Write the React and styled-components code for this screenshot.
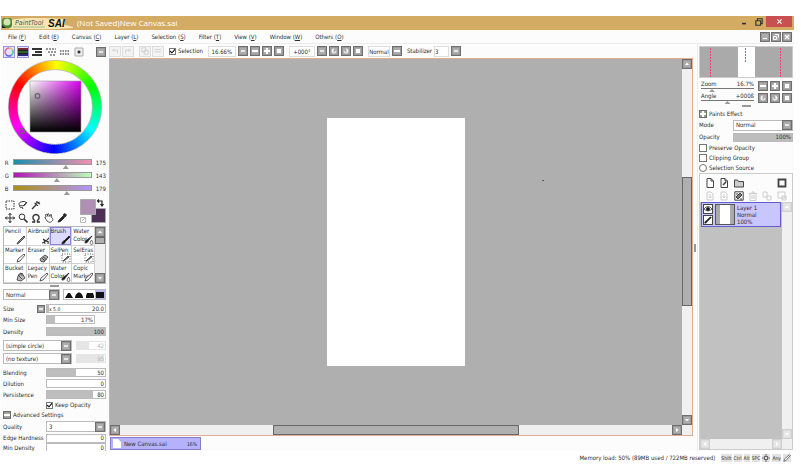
import React from "react";
import styled, { createGlobalStyle } from "styled-components";

const GlobalStyle = createGlobalStyle`
  * { box-sizing: border-box; }
  body { margin: 0; background: #fff; }
  body, button, input, select {
    font-family: "DejaVu Sans Condensed", "DejaVu Sans", sans-serif;
    font-size: 6px;
    line-height: 8px;
    color: #2c2c2c;
  }
  button, input, select { margin: 0; padding: 0; border-radius: 0; }
  svg { display: block; }
`;

const Window = styled.div`
  display: flex;
  flex-direction: column;
  height: 100vh;
  padding: 16px 7px 6px 1px;
`;

const TitleBar = styled.header`
  display: flex;
  align-items: center;
  flex: none;
  height: 14px;
  background: #d4ab62;
`;

const Title = styled.h1`
  flex: 1;
  margin: 0 0 0 4px;
  font: 400 8px/14px "Open Sans", sans-serif;
  color: #fff;
`;

const WindowButton = styled.button`
  display: flex;
  align-items: center;
  justify-content: center;
  width: ${(p) => (p.$close ? "26px" : "15px")};
  height: 11px;
  margin-right: ${(p) => (p.$close ? "2px" : "0")};
  align-self: flex-start;
  border: 0;
  background: ${(p) => (p.$close ? "#c75050" : "transparent")};
`;

const MenuBar = styled.nav`
  display: flex;
  align-items: center;
  flex: none;
  gap: 13px;
  height: 14px;
  padding: 0 2px 0 7px;
  border-bottom: 1px solid #ececec;
  background: #fcfcfc;
`;

const MenuItem = styled.button`
  border: 0;
  background: none;
  white-space: nowrap;
`;

const MenuControls = styled.div`
  display: flex;
  gap: 1px;
  margin-left: auto;
`;

const MiniButton = styled.button`
  display: flex;
  align-items: center;
  justify-content: center;
  flex: none;
  width: ${(p) => (p.$small ? "8px" : "10px")};
  height: ${(p) => (p.$small ? "8px" : "10px")};
  border: 1px solid ${(p) => (p.$faded ? "#d0d0d0" : "#6e6e6e")};
  background: ${(p) => (p.$faded ? "#e6e6e6" : "#adadad")};
  box-shadow: inset 0 0 0 1px ${(p) => (p.$faded ? "#ddd" : "#9a9a9a")};
`;

const Body = styled.main`
  display: flex;
  flex: 1;
  min-height: 0;
  background: #fcfcfc;
`;

const Tools = styled.aside`
  display: flex;
  flex-direction: column;
  flex: none;
  width: 108px;
  padding: 1px 3px 0 2px;
  overflow: hidden;
`;

const ColorTabs = styled.div`
  display: flex;
  align-items: center;
  flex: none;
  gap: 2px;
  height: 13px;

  & > :last-child { margin-left: auto; }
`;

const ColorTab = styled.button`
  display: flex;
  align-items: center;
  justify-content: center;
  width: 12px;
  height: 12px;
  border: 1px solid ${(p) => (p.$on ? "#9a93e6" : "transparent")};
  background: ${(p) => (p.$on ? "#e3e1fd" : "none")};
`;

const Wheel = styled.svg`
  align-self: center;
  flex: none;
  width: 94px;
  height: 94px;
  margin: 2px 0 5px;
`;

const Channel = styled.label`
  display: grid;
  grid-template-columns: 10px 1fr 14px;
  align-items: start;
  flex: none;
  height: 13px;

  span:last-child { text-align: right; }
`;

const ChannelRange = styled.input`
  appearance: none;
  width: 100%;
  height: 6px;
  background: none;

  &::-webkit-slider-runnable-track {
    height: 6px;
    border: 1px solid #999;
    background: linear-gradient(to right, ${(p) => p.$from}, ${(p) => p.$to});
  }
  &::-webkit-slider-thumb {
    appearance: none;
    width: 6px;
    height: 4px;
    margin-top: 5px;
    background: #999;
    clip-path: polygon(50% 0, 100% 100%, 0 100%);
  }
`;

const ToolArea = styled.div`
  display: flex;
  justify-content: space-between;
  flex: none;
  height: 28px;
`;

const ToolGrid = styled.div`
  display: grid;
  grid-template-columns: repeat(5, 13px);
  grid-auto-rows: 13px;
`;

const ToolButton = styled.button`
  display: flex;
  align-items: center;
  justify-content: center;
  border: 0;
  background: none;
`;

const Swatches = styled.svg`
  width: 27px;
  height: 26px;
`;

const BrushArea = styled.div`
  display: flex;
  flex: none;
  height: 58px;
  border: 1px solid #b5b5b5;
`;

const BrushGrid = styled.div`
  display: grid;
  flex: 1;
  grid-template-columns: repeat(4, 1fr);
  grid-auto-rows: 1fr;
`;

const BrushButton = styled.button`
  display: grid;
  align-items: start;
  overflow: hidden;
  border: solid #d2d2d2;
  border-width: 0 1px 1px 0;
  padding-left: 1px;
  background: ${(p) => (p.$on ? "#dcdafd" : "#fff")};
  box-shadow: ${(p) => (p.$on ? "inset 0 0 0 1px #8d86dd" : "none")};
  line-height: 8px;
  text-align: left;
  white-space: pre-line;

  span, svg { grid-area: 1 / 1; }
  svg { place-self: end; }
`;

const VScroll = styled.div`
  display: flex;
  flex-direction: column;
  flex: none;
  width: 10px;
  background: #f0f0f0;
`;

const HScroll = styled.div`
  display: flex;
  flex: none;
  height: 10px;
  padding-right: 10px;
  background: #f0f0f0;
`;

const Track = styled.div`
  display: flex;
  flex: 1;
  flex-direction: ${(p) => (p.$vertical ? "column" : "row")};
`;

const Space = styled.div`
  flex: ${(p) => p.$grow};
`;

const Thumb = styled.div`
  flex: ${(p) => p.$grow};
  border: 1px solid #666;
  background: #afafaf;
`;

const Grip = styled.div`
  flex: none;
  align-self: center;
  width: ${(p) => (p.$vertical ? "2px" : "9px")};
  height: ${(p) => (p.$vertical ? "8px" : "2px")};
  margin: ${(p) => (p.$vertical ? "0 1px" : "1px 0 2px")};
  background: #999;
`;

const BlendRow = styled.div`
  display: flex;
  flex: none;
  gap: 3px;
  height: 11px;
  margin-bottom: 3px;
`;

const SelectBox = styled.div`
  display: flex;
  align-items: center;
  flex: 1;
  min-width: 0;
  height: 11px;
  border: 1px solid #bbb;
  background: #fff;
`;

const Select = styled.select`
  appearance: none;
  flex: 1;
  min-width: 0;
  height: 9px;
  padding-left: 2px;
  border: 0;
  background: #fff;
`;

const Tips = styled.div`
  display: flex;
  width: 43px;
  border: 1px solid #bbb;
  background: #fff;
`;

const TipButton = styled.button`
  flex: 1;
  border: 0;
  background: ${(p) => (p.$on ? "#b9b5f5" : "none")};
`;

const Setting = styled.label`
  display: grid;
  grid-template-columns: 43px 1fr;
  align-items: center;
  flex: none;
  height: ${(p) => p.$height || 11}px;
  white-space: nowrap;
  padding-right: ${(p) => (p.$short ? "11px" : "0")};
`;

const SizeLabel = styled.span`
  display: flex;
  align-items: center;
  justify-content: space-between;
  padding-right: 1px;
`;

const Bar = styled.span`
  display: grid;
  grid-template-columns: 1fr;
  align-items: center;
  height: 9px;
  opacity: ${(p) => (p.$faded ? 0.35 : 1)};

  input, b, i { grid-area: 1 / 1; }
  b, i { font-weight: 400; font-style: normal; pointer-events: none; }
  b { padding-right: 2px; text-align: right; }
  i { padding-left: 3px; font-size: 5px; }
`;

const BarRange = styled.input`
  appearance: none;
  width: 100%;
  min-width: 0;
  height: 9px;
  border: 1px solid #bbb;
  background: linear-gradient(to right, #bdbdbd ${(p) => p.value}%, #fff ${(p) => p.value}%);

  &::-webkit-slider-thumb { appearance: none; width: 1px; height: 7px; }
`;

const Shapes = styled.div`
  flex: none;
  padding: 1px 0 2px;
`;

const ShapeRow = styled.div`
  display: grid;
  grid-template-columns: 69px 1fr;
  gap: 4px;
  align-items: center;
  height: 13px;
`;

const Check = styled.label`
  display: flex;
  align-items: center;
  flex: none;
  gap: 2px;
  height: 10px;
  margin-left: ${(p) => (p.$indent ? "43px" : "0")};
  white-space: nowrap;
`;

const Tick = styled.input`
  appearance: none;
  display: grid;
  place-items: center;
  width: ${(p) => (p.$small ? "7px" : "8px")};
  height: ${(p) => (p.$small ? "7px" : "8px")};
  border: 1px solid #777;
  border-radius: ${(p) => (p.type === "radio" ? "50%" : "0")};
  background: #fff;

  &:checked::before {
    content: "";
    width: 5px;
    height: 5px;
    background: #111;
    clip-path: polygon(0 40%, 40% 70%, 100% 0, 100% 35%, 40% 100%, 0 70%);
  }
`;

const SectionTitle = styled.div`
  display: flex;
  align-items: center;
  flex: none;
  gap: 2px;
  height: 10px;
`;

const Work = styled.section`
  display: flex;
  flex-direction: column;
  flex: 1;
  min-width: 0;
`;

const Toolbar = styled.div`
  display: flex;
  align-items: center;
  flex: none;
  height: 14px;
`;

const Group = styled.div`
  display: flex;
  align-items: center;
  gap: ${(p) => p.$gap || 2}px;
  margin-right: 5px;
`;

const FadedButton = styled.button`
  display: flex;
  align-items: center;
  justify-content: center;
  width: 12px;
  height: 11px;
  border: 1px solid #ddd;
  background: #f3f3f3;
`;

const Field = styled.input`
  width: ${(p) => p.$width}px;
  height: 11px;
  border: 1px solid #ddd;
  background: #fff;
  text-align: ${(p) => p.$align || "center"};
`;

const Frame = styled.div`
  display: flex;
  flex-direction: column;
  flex: 1;
  min-height: 0;
  border: 1px solid #e0ac92;
`;

const Stage = styled.div`
  display: flex;
  flex: 1;
  min-height: 0;
`;

const Desk = styled.div`
  position: relative;
  display: flex;
  align-items: center;
  justify-content: center;
  flex: 1;
  background: #afafaf;
`;

const Paper = styled.div`
  height: 67.5%;
  aspect-ratio: 139 / 248;
  background: #fff;
`;

const Cursor = styled.div`
  position: absolute;
  left: 75.5%;
  top: 33%;
  width: 2px;
  height: 1px;
  background: #555;
`;

const FileTabs = styled.div`
  flex: none;
  height: 15px;
  padding: 1px 0 0 1px;
`;

const FileTab = styled.button`
  display: flex;
  align-items: center;
  gap: 3px;
  width: 91px;
  height: 13px;
  padding: 0 3px 0 2px;
  border: 1px solid #837dcb;
  background: #b5b1fb;

  small { margin-left: auto; font-size: 5px; }
`;

const Layers = styled.aside`
  display: flex;
  flex-direction: column;
  flex: none;
  width: 97px;
  padding: 2px 1px 1px 1px;
  border-left: 1px solid #eee;
`;

const Navigator = styled.svg`
  flex: none;
  width: 100%;
  height: 32px;
  margin-bottom: 2px;
`;

const NavRow = styled.div`
  display: grid;
  grid-template-columns: 1fr 35px;
  gap: 4px;
  align-items: center;
  flex: none;
  height: 12px;
  padding-left: 2px;
`;

const NavSlider = styled.label`
  display: grid;
  grid-template-columns: 1fr auto;
  grid-template-rows: 7px 5px;
  line-height: 7px;

  input { grid-column: 1 / 3; }
`;

const NavRange = styled.input`
  appearance: none;
  width: 100%;
  height: 3px;
  background: none;

  &::-webkit-slider-runnable-track { height: 1px; background: #777; }
  &::-webkit-slider-thumb {
    appearance: none;
    width: 6px;
    height: 3px;
    margin-top: 1px;
    background: #999;
    clip-path: polygon(50% 0, 100% 100%, 0 100%);
  }
`;

const ModeRow = styled.label`
  display: grid;
  grid-template-columns: 34px 1fr;
  align-items: center;
  flex: none;
  height: 12px;
`;

const LayerPanel = styled.div`
  display: flex;
  flex-direction: column;
  flex: 1;
  min-height: 0;
  border: 1px solid #ccc;
`;

const LayerTools = styled.div`
  display: grid;
  grid-template-columns: repeat(6, 1fr);
  grid-auto-rows: 13px;
  flex: none;
  padding: 2px 3px 0;
`;

const LayerList = styled.div`
  flex: 1;
  padding: 0 1px;
  background: #c1c1c1;
`;

const LayerItem = styled.div`
  display: flex;
  gap: 2px;
  height: 25px;
  padding: 1px;
  border: 1px solid #635bd0;
  background: #c9c6fd;
  line-height: 7px;
`;

const LayerToggles = styled.div`
  display: flex;
  flex-direction: column;
  gap: 1px;
`;

const LayerToggle = styled.button`
  display: flex;
  align-items: center;
  justify-content: center;
  width: 10px;
  height: 10px;
  border: 1px solid #444;
  background: #fff;
`;

const Thumbnail = styled.div`
  width: 20px;
  border: solid #aaa;
  border-width: 0 5px;
  outline: 1px solid #555;
  outline-offset: -1px;
  background: #fff;
`;

const StatusBar = styled.footer`
  display: flex;
  align-items: center;
  justify-content: flex-end;
  flex: none;
  height: 13px;
  padding-right: 2px;

  span { margin-right: 5px; }
`;

const Key = styled.kbd`
  display: flex;
  align-items: center;
  height: 8px;
  padding: 0 1px;
  background: #e2e2e2;
  background-clip: content-box;
  font: 5px/8px "DejaVu Sans Condensed", sans-serif;
`;

const glyphs = {
  down: <path d="M1 2h4L3 4.5z" fill="#fff" />,
  up: <path d="M1 4h4L3 1.5z" fill="#fff" />,
  left: <path d="M4 1v4L1.5 3z" fill="#fff" />,
  right: <path d="M2 1v4l2.500-2z" fill="#fff" />,
  minus: <path d="M0 2h6v2H0z" fill="#fff" />,
  plus: <path d="M2 0h2v2h2v2H4v2H2V4H0V2h2z" fill="#fff" />,
  square: <path d="M1 1h4v4H1z" fill="#fff" />,
  box: <path d="M1 2h4v2H1z" fill="#e6e6e6" />,
  cw: <path d="M1 3a2 2 0 1 0 2-2M3 3h2" fill="none" stroke="#fff" />,
  ccw: <path d="M5 3a2 2 0 1 1-2-2M3 3H1" fill="none" stroke="#fff" />,
  low: <path d="M1 4h4v1H1z" fill="#fff" />,
  restore: <path d="M.5 2.500h3v3h-3zM2 .5h3.500v3" fill="none" stroke="#fff" />,
  cross: <path d="M1 1l4 4M5 1L1 5" stroke="#fff" strokeWidth="1.300" />,
};

function Mini({ glyph, label, faded, small }) {
  return (
    <MiniButton aria-label={label || glyph} $faded={faded} $small={small}>
      <svg width="6" height="6" viewBox="0 0 6 6">{glyphs[glyph]}</svg>
    </MiniButton>
  );
}

function Icon({ size = 10, color = "#333", children }) {
  return (
    <svg width={size} height={size} viewBox="0 0 10 10" fill="none" stroke={color}>
      {children}
    </svg>
  );
}

const channels = [
  { name: "R", value: 175, from: "#198fae", to: "#f58fae" },
  { name: "G", value: 143, from: "#b412b8", to: "#b9ffb9" },
  { name: "B", value: 179, from: "#af8f12", to: "#b094ff" },
];

const tools = [
  ["Select", <path d="M1 1h8v8H1z" strokeDasharray="1.500 1" />],
  ["Lasso", <path d="M2 6C0 4 1 2 5 1.500s4 3 1 4-3-1-4 .5 1 2 2 1l1 2M6 5l3-3" />],
  ["Wand", <path d="M1 9l5-5M6 1v2M3.500 3.500h2M8.500 2L7 3l2 1M6.500 5v1" strokeWidth="1.300" />],
  null,
  null,
  ["Move", <path d="M5 0v10M0 5h10M3.500 2L5 .5 6.500 2M3.500 8L5 9.500 6.500 8M2 3.500L.5 5 2 6.500M8 3.500L9.500 5 8 6.500" />],
  ["Zoom", <><circle cx="4" cy="3.800" r="2.800" /><path d="M6 6l3.500 3.500" strokeWidth="1.600" /></>],
  ["Rotate", <path d="M1 9h2.500V7.500C.5 5 2 1.500 5 1.500S9.500 5 6.500 7.500V9H9" strokeWidth="1.400" />],
  ["Hand", <path d="M3 8L.8 4.500 2 4 1.500 1.500l1-.5L4 3.500 3.500 1l1-.3L6 3.500l.5-2 1 .2.2 3 1 .8C9.500 8 7 9.500 5 9.300z" strokeWidth=".8" />],
  ["Dropper", <path d="M1 9l1-2 4-4 1.500 1.500-4 4zM6 2l2 2 1.500-2L8 .5z" fill="#222" />],
];

const pen = <path d="M1 9l1-3 6-5 1 1-5 6z" fill="#fff" strokeWidth=".8" />;
const darkBrush = <path d="M1 9c0-2 1-3 2-3l5-5 1 1-5 5c0 1-1 2-3 2z" fill="#111" />;
const wetBrush = <><path d="M1 8c0-2 1-3 2-3l5-4-4 5c0 1-1 2-3 2z" fill="#111" /><path d="M7.500 5c2 3 1.500 4.500 0 4.500S5.500 8 7.500 5z" fill="#fff" strokeWidth=".7" /></>;
const eraser = <path d="M1 6l5-4 3 2-4 5-3-.5zM3 5l3 3M4.500 4l3 3" fill="#aaa" strokeWidth=".8" />;
const selMark = <><path d="M1 1h8v8H1z" strokeDasharray="1 1.500" strokeWidth=".8" /><path d="M2 8l5-5 1 1-5 4z" fill="#777" strokeWidth=".7" /></>;

const brushes = [
  ["Pencil", <path d="M1 9l1-2 6-6 1 1-6 6z" fill="#888" strokeWidth=".8" />],
  ["AirBrush", <path d="M1 8c3 0 4-2 8-6M2 4l3 2 3 1M4 9l-1-4M7 7v2" strokeWidth="1.100" />],
  ["Brush", darkBrush],
  ["Water\nColor", wetBrush],
  ["Marker", pen],
  ["Eraser", eraser],
  ["SelPen", selMark],
  ["SelEras", selMark],
  ["Bucket", <path d="M1 8l1-4 4-3 3 5-4 3zM3 4l3 3M2 4c2-4 4-3 4 0" fill="#bbb" strokeWidth=".8" />],
  ["Legacy\nPen", pen],
  ["Water\nColor", wetBrush],
  ["Copic\nMarker", pen],
];

const tips = [
  "M1 8h8L6 3H4z",
  "M1 8h8C9 5 7 2.500 5 2.500S1 5 1 8z",
  "M1 8h8V6L8 3H2L1 6z",
  "M1 2h8v6H1z",
];

const page = <path d="M2 .5h4L8.500 3v6.500H2zM6 .5V3h2.500" />;
const fadedPage = <path d="M2 1h4l2 2v6H2zM5 3v4M3.500 5.500L5 7l1.500-1.500" />;

const layerTools = [
  ["New layer", page],
  ["New linework layer", <>{page}<path d="M4 7l3-3" strokeWidth="1.600" /></>],
  ["New folder", <path d="M.5 2h3l1 1.500h5V9h-9z" fill="#ccc" />],
  null,
  null,
  ["Mask", <path d="M1.500 1.500h7v7h-7z" strokeWidth="1.800" />],
  ["Transfer down", fadedPage, true],
  ["Merge down", fadedPage, true],
  ["Clear layer", <><path d="M.8 .8h8.400v8.400H.8z" /><path d="M2 6l4-4 2 2-4 4zM2 3h2M6 8h2" fill="#777" /></>],
  ["Delete layer", <path d="M1 2.500h8M2 3v6.500h6V3M4 2V1h2v1M4 4v4M6 4v4" />, true],
  ["Copy mask", <path d="M1 1h4v5H1zM5 5h4v4H5z" />, true],
  ["Apply mask", <path d="M1 1h7v6H1zM5 5h4v4H5z" />, true],
];

function ValueBar({ value, text, prefix, faded, label }) {
  return (
    <Bar $faded={faded}>
      <BarRange type="range" value={value} readOnly aria-label={label} />
      {prefix && <i>{prefix}</i>}
      <b>{text}</b>
    </Bar>
  );
}

function Dropdown({ value, label }) {
  return (
    <SelectBox>
      <Select aria-label={label} defaultValue={value}>
        <option>{value}</option>
      </Select>
      <Mini glyph="box" label={"Open " + label} />
    </SelectBox>
  );
}

function ColorWheel() {
  const hues = Array.from({ length: 120 }, (_, i) => i * 3);
  const point = (deg) => {
    const a = (deg * Math.PI) / 180;
    return `${47 + 42 * Math.cos(a)} ${47 + 42 * Math.sin(a)}`;
  };
  return (
    <Wheel viewBox="0 0 94 94">
      <defs>
        <linearGradient id="sat">
          <stop stopColor="#fff" />
          <stop offset="1" stopColor="#d900f0" />
        </linearGradient>
        <linearGradient id="dark" x2="0" y2="1">
          <stop stopColor="#000" stopOpacity="0" />
          <stop offset="1" stopColor="#000" />
        </linearGradient>
      </defs>
      <circle cx="47" cy="47" r="42" fill="none" stroke="#bbb" strokeWidth="10" />
      {hues.map((d) => (
        <path
          key={d}
          d={`M${point(d)}A42 42 0 0 1 ${point(d + 4)}`}
          stroke={`hsl(${(150 + d) % 360} 100% 50%)`}
          strokeWidth="8.500"
          fill="none"
        />
      ))}
      <path d="M22 21h51v51H22z" fill="url(#sat)" />
      <path d="M22 21h51v51H22z" fill="url(#dark)" stroke="#999" strokeWidth=".6" />
      <g fill="none" stroke="#666" strokeWidth="1.200">
        <circle cx="29.500" cy="36" r="2.300" />
        <circle cx="14" cy="71" r="2.500" />
      </g>
    </Wheel>
  );
}

function ToolPanel() {
  return (
    <Tools>
      <ColorTabs>
        <ColorTab $on aria-label="Wheel">
          <svg width="10" height="10" viewBox="0 0 10 10" fill="none" strokeWidth="1.500">
            <path d="M5 1a4 4 0 0 1 3.500 2" stroke="#d6c84a" />
            <path d="M8.500 3A4 4 0 0 1 7 8.500" stroke="#4fc78a" />
            <path d="M7 8.500A4 4 0 0 1 2 7.500" stroke="#5a68e0" />
            <path d="M2 7.500A4 4 0 0 1 5 1" stroke="#e06a90" />
          </svg>
        </ColorTab>
        <ColorTab $on aria-label="RGB">
          <svg width="10" height="10" viewBox="0 0 10 10">
            <path d="M0 1h10v8H0z" fill="#222" />
            <path d="M0 2h10" stroke="#c33" />
            <path d="M0 5h10" stroke="#3a3" />
            <path d="M0 8h10" stroke="#33c" />
          </svg>
        </ColorTab>
        <ColorTab aria-label="HSV"><Icon><path d="M0 2h10M3 5h7M0 8h10" strokeWidth="2" /></Icon></ColorTab>
        <ColorTab aria-label="Mixer"><Icon color="#777"><path d="M0 2h10M2 5h8M4 8h6" strokeDasharray="2 1" strokeWidth="1.500" /></Icon></ColorTab>
        <ColorTab aria-label="Swatches"><Icon color="#888"><path d="M0 4h10M0 7h10" strokeDasharray="1.500 1" strokeWidth="2" /></Icon></ColorTab>
        <ColorTab aria-label="Scratchpad"><Icon color="#aaa"><path d="M1 1h8v8H1z" fill="#eee" /><circle cx="5" cy="5" r="1.600" fill="#222" /></Icon></ColorTab>
        <Mini glyph="box" label="Color options" />
      </ColorTabs>
      <ColorWheel />
      {channels.map((c) => (
        <Channel key={c.name}>
          <span>&nbsp;{c.name}</span>
          <ChannelRange type="range" max="255" defaultValue={c.value} $from={c.from} $to={c.to} />
          <span>{c.value}</span>
        </Channel>
      ))}
      <ToolArea>
        <ToolGrid>
          {tools.map((t, i) =>
            t ? (
              <ToolButton key={i} aria-label={t[0]}><Icon>{t[1]}</Icon></ToolButton>
            ) : (
              <span key={i} />
            )
          )}
        </ToolGrid>
        <Swatches viewBox="0 0 27 26">
          <path d="M12.500 10.500h14v14h-14z" fill="#4b2f57" stroke="#aaa" />
          <path d="M1.500 1.500h15v15h-15z" fill="#af8fb3" stroke="#aaa" />
          <path d="M19 3h4v4M20 1.500L18.500 3 20 4.500M21.500 6L23 8l1.500-2" fill="none" stroke="#222" strokeWidth="1.200" />
          <path d="M1.500 19.500h5v5h-5zM3 23l3-3" fill="#fff" stroke="#bbb" />
        </Swatches>
      </ToolArea>
      <BrushArea>
        <BrushGrid>
          {brushes.map(([name, icon], i) => (
            <BrushButton key={i} $on={name === "Brush"}>
              <span>{name}</span>
              <Icon>{icon}</Icon>
            </BrushButton>
          ))}
        </BrushGrid>
        <VScroll>
          <Mini glyph="up" />
          <Track $vertical>
            <Thumb $grow={1} />
            <Space $grow={6} />
          </Track>
          <Mini glyph="down" />
        </VScroll>
      </BrushArea>
      <Grip />
      <BlendRow>
        <Dropdown value="Normal" label="Brush mode" />
        <Tips>
          {tips.map((d, i) => (
            <TipButton key={d} $on={i === 3} aria-label={"Tip " + (i + 1)}>
              <svg width="10" height="9" viewBox="0 0 10 9"><path d={d} fill="#111" /></svg>
            </TipButton>
          ))}
        </Tips>
      </BlendRow>
      <Setting>
        <SizeLabel>Size <Mini glyph="box" label="Size unit" small /></SizeLabel>
        <ValueBar value={4} prefix="x 5.0" text="20.0" label="Size" />
      </Setting>
      <Setting $short>Min Size<ValueBar value={17} text="17%" label="Min Size" /></Setting>
      <Setting $height={13}>Density<ValueBar value={100} text="100" label="Density" /></Setting>
      <Shapes>
        <ShapeRow>
          <Dropdown value="(simple circle)" label="Brush shape" />
          <ValueBar value={42} text="42" faded label="Shape strength" />
        </ShapeRow>
        <ShapeRow>
          <Dropdown value="(no texture)" label="Texture" />
          <ValueBar value={95} text="95" faded label="Texture strength" />
        </ShapeRow>
      </Shapes>
      <Setting>Blending<ValueBar value={50} text="50" label="Blending" /></Setting>
      <Setting>Dilution<ValueBar value={0} text="0" label="Dilution" /></Setting>
      <Setting>Persistence<ValueBar value={80} text="80" label="Persistence" /></Setting>
      <Check $indent><Tick $small type="checkbox" defaultChecked />Keep Opacity</Check>
      <SectionTitle><Mini glyph="minus" label="Collapse" small />Advanced Settings</SectionTitle>
      <Setting $height={13}>Quality<Dropdown value="3" label="Quality" /></Setting>
      <Setting $height={10}>Edge Hardness<ValueBar value={0} text="0" label="Edge Hardness" /></Setting>
      <Setting $height={9}>Min Density<ValueBar value={0} text="0" label="Min Density" /></Setting>
    </Tools>
  );
}

function Workspace() {
  return (
    <Work>
      <Toolbar>
        <Group $gap={1}>
          <FadedButton aria-label="Undo"><Icon size={8} color="#ccc"><path d="M8 8V4H2M4 2L2 4l2 2" /></Icon></FadedButton>
          <FadedButton aria-label="Redo"><Icon size={8} color="#ccc"><path d="M2 8V4h6M6 2l2 2-2 2" /></Icon></FadedButton>
        </Group>
        <Group $gap={1}>
          <FadedButton aria-label="Deselect"><Icon size={8} color="#ccc"><path d="M1 1h5v5H1zM4 4h5v5H4z" /></Icon></FadedButton>
          <FadedButton aria-label="Invert"><Icon size={8} color="#ccc"><path d="M1 3h8M1 6h8" /></Icon></FadedButton>
        </Group>
        <Group>
          <Check><Tick $small type="checkbox" defaultChecked />Selection</Check>
        </Group>
        <Group>
          <Field $width={28} defaultValue="16.66%" aria-label="Zoom" />
          <Mini glyph="box" label="Zoom list" />
          <Mini glyph="minus" label="Zoom out" />
          <Mini glyph="plus" label="Zoom in" />
          <Mini glyph="square" label="Reset zoom" />
        </Group>
        <Group>
          <Field $width={26} defaultValue="+000°" aria-label="Angle" />
          <Mini glyph="box" label="Angle list" />
          <Mini glyph="ccw" label="Rotate left" />
          <Mini glyph="cw" label="Rotate right" />
          <Mini glyph="square" label="Reset angle" />
        </Group>
        <Group>
          <Field $width={22} defaultValue="Normal" aria-label="View" />
          <Mini glyph="minus" label="Flip" />
        </Group>
        <Group>
          <label htmlFor="stabilizer">Stabilizer</label>
          <Field id="stabilizer" $width={15} $align="left" defaultValue="3" />
          <Mini glyph="box" label="Stabilizer list" />
        </Group>
      </Toolbar>
      <Frame>
        <Stage>
          <Desk>
            <Paper />
            <Cursor />
          </Desk>
          <VScroll>
            <Mini glyph="up" />
            <Track $vertical>
              <Space $grow={109} />
              <Thumb $grow={128} />
              <Space $grow={110} />
            </Track>
            <Mini glyph="down" />
          </VScroll>
        </Stage>
        <HScroll>
          <Mini glyph="left" />
          <Track>
            <Space $grow={154} />
            <Thumb $grow={245} />
            <Space $grow={154} />
          </Track>
          <Mini glyph="right" />
        </HScroll>
      </Frame>
      <FileTabs>
        <FileTab>
          <svg width="8" height="9" viewBox="0 0 8 9"><path d="M0 0h5l3 3v6H0z" fill="#fff" /></svg>
          New Canvas.sai
          <small>16%</small>
        </FileTab>
      </FileTabs>
    </Work>
  );
}

function LayerSide() {
  return (
    <Layers>
      <Navigator viewBox="0 0 94 32" preserveAspectRatio="none">
        <path d="M.5 .5h93v31H.5z" fill="#aaa" stroke="#ccc" />
        <path d="M39 1h17v30H39z" fill="#fff" />
        <path d="M11.500 2v29M81.500 2v29M46.500 2v14" stroke="#e8447a" strokeDasharray="2 1" />
      </Navigator>
      <NavRow>
        <NavSlider>
          <span>Zoom</span><span>16.7%</span>
          <NavRange type="range" defaultValue="17" />
        </NavSlider>
        <Group><Mini glyph="minus" label="Zoom out" /><Mini glyph="plus" label="Zoom in" /><Mini glyph="square" label="Fit" /></Group>
      </NavRow>
      <NavRow>
        <NavSlider>
          <span>Angle</span><span>+000ß</span>
          <NavRange type="range" defaultValue="50" />
        </NavSlider>
        <Group><Mini glyph="ccw" label="Rotate left" /><Mini glyph="cw" label="Rotate right" /><Mini glyph="square" label="Reset" /></Group>
      </NavRow>
      <Grip />
      <SectionTitle><Mini glyph="plus" label="Expand" small />Paints Effect</SectionTitle>
      <ModeRow>Mode<Dropdown value="Normal" label="Layer mode" /></ModeRow>
      <ModeRow>Opacity<ValueBar value={100} text="100%" label="Layer opacity" /></ModeRow>
      <Check><Tick type="checkbox" />Preserve Opacity</Check>
      <Check><Tick type="checkbox" />Clipping Group</Check>
      <Check><Tick type="radio" />Selection Source</Check>
      <LayerPanel>
        <LayerTools>
          {layerTools.map((t, i) =>
            t ? (
              <ToolButton key={i} aria-label={t[0]}><Icon color={t[2] ? "#ccc" : "#444"}>{t[1]}</Icon></ToolButton>
            ) : (
              <span key={i} />
            )
          )}
        </LayerTools>
        <Stage>
          <LayerList>
            <LayerItem>
              <LayerToggles>
                <LayerToggle aria-label="Visible">
                  <Icon size={8}><path d="M0 5c3-4 7-4 10 0-3 3-7 3-10 0z" /><circle cx="5" cy="5" r="2" fill="#111" /></Icon>
                </LayerToggle>
                <LayerToggle aria-label="Editing"><Icon size={8}>{darkBrush}</Icon></LayerToggle>
              </LayerToggles>
              <Thumbnail />
              <div>Layer 1<br />Normal<br />100%</div>
            </LayerItem>
          </LayerList>
          <VScroll>
            <Mini glyph="up" faded />
            <Track $vertical />
            <Mini glyph="down" faded />
          </VScroll>
        </Stage>
        <HScroll>
          <Mini glyph="left" faded />
          <Track />
          <Mini glyph="right" faded />
        </HScroll>
      </LayerPanel>
    </Layers>
  );
}

const menus = [
  ["File", "F"], ["Edit", "E"], ["Canvas", "C"], ["Layer", "L"], ["Selection", "S"],
  ["Filter", "T"], ["View", "V"], ["Window", "W"], ["Others", "O"],
];

export default function App() {
  return (
    <Window>
      <GlobalStyle />
      <TitleBar>
        <svg width="72" height="13" viewBox="0 0 72 13">
          <path d="M10 3C20 0 50 1 64 2v6c3 1 6 1 8 2v1C50 13 25 12 8 12z" fill="#fff5c9" opacity=".8" />
          <rect x="1" y="1" width="10" height="10" rx="3" fill="#4a8a35" />
          <circle cx="6" cy="5" r="3.500" fill="#cfe5b5" />
          <path d="M1 8l4 3H1z" fill="#222" />
          <path d="M12 10h32" stroke="#9ac08a" />
          <text x="14" y="8" fontSize="7" fontStyle="italic" fill="#555" fontFamily="DejaVu Sans Condensed">PaintTool</text>
          <text x="47" y="10" fontSize="10" fontWeight="700" fontStyle="italic" fill="#111" fontFamily="Liberation Sans">SAI</text>
        </svg>
        <Title>(Not Saved)New Canvas.sai</Title>
        <WindowButton aria-label="Minimize"><Icon size={8}><path d="M2.500 7h5" strokeWidth="2" /></Icon></WindowButton>
        <WindowButton aria-label="Restore"><Icon size={8}><path d="M1 3.500h6V9H1zM3 3V1h6v6H7" strokeWidth="1.400" /></Icon></WindowButton>
        <WindowButton $close aria-label="Close"><Icon size={7} color="#fff"><path d="M2 2l6 6M8 2L2 8" strokeWidth="1.500" /></Icon></WindowButton>
      </TitleBar>
      <MenuBar>
        {menus.map(([name, key]) => (
          <MenuItem key={name}>{name} (<u>{key}</u>)</MenuItem>
        ))}
        <MenuControls>
          <Mini glyph="low" label="Minimize canvas" />
          <Mini glyph="restore" label="Restore canvas" />
          <Mini glyph="cross" label="Close canvas" />
        </MenuControls>
      </MenuBar>
      <Body>
        <ToolPanel />
        <Workspace />
        <Grip $vertical />
        <LayerSide />
      </Body>
      <StatusBar>
        <span>Memory load: 50% (89MB used / 722MB reserved)</span>
        <Key>Shift</Key>
        <Key>Ctrl</Key>
        <Key>Alt</Key>
        <Key>SPC</Key>
        <Key><Icon size={8}><path d="M5 0v2M5 8v2M0 5h2M8 5h2M3 3h4v4H3z" /></Icon></Key>
        <Key>Any</Key>
        <Key><Icon size={8}>{pen}</Icon></Key>
      </StatusBar>
    </Window>
  );
}
